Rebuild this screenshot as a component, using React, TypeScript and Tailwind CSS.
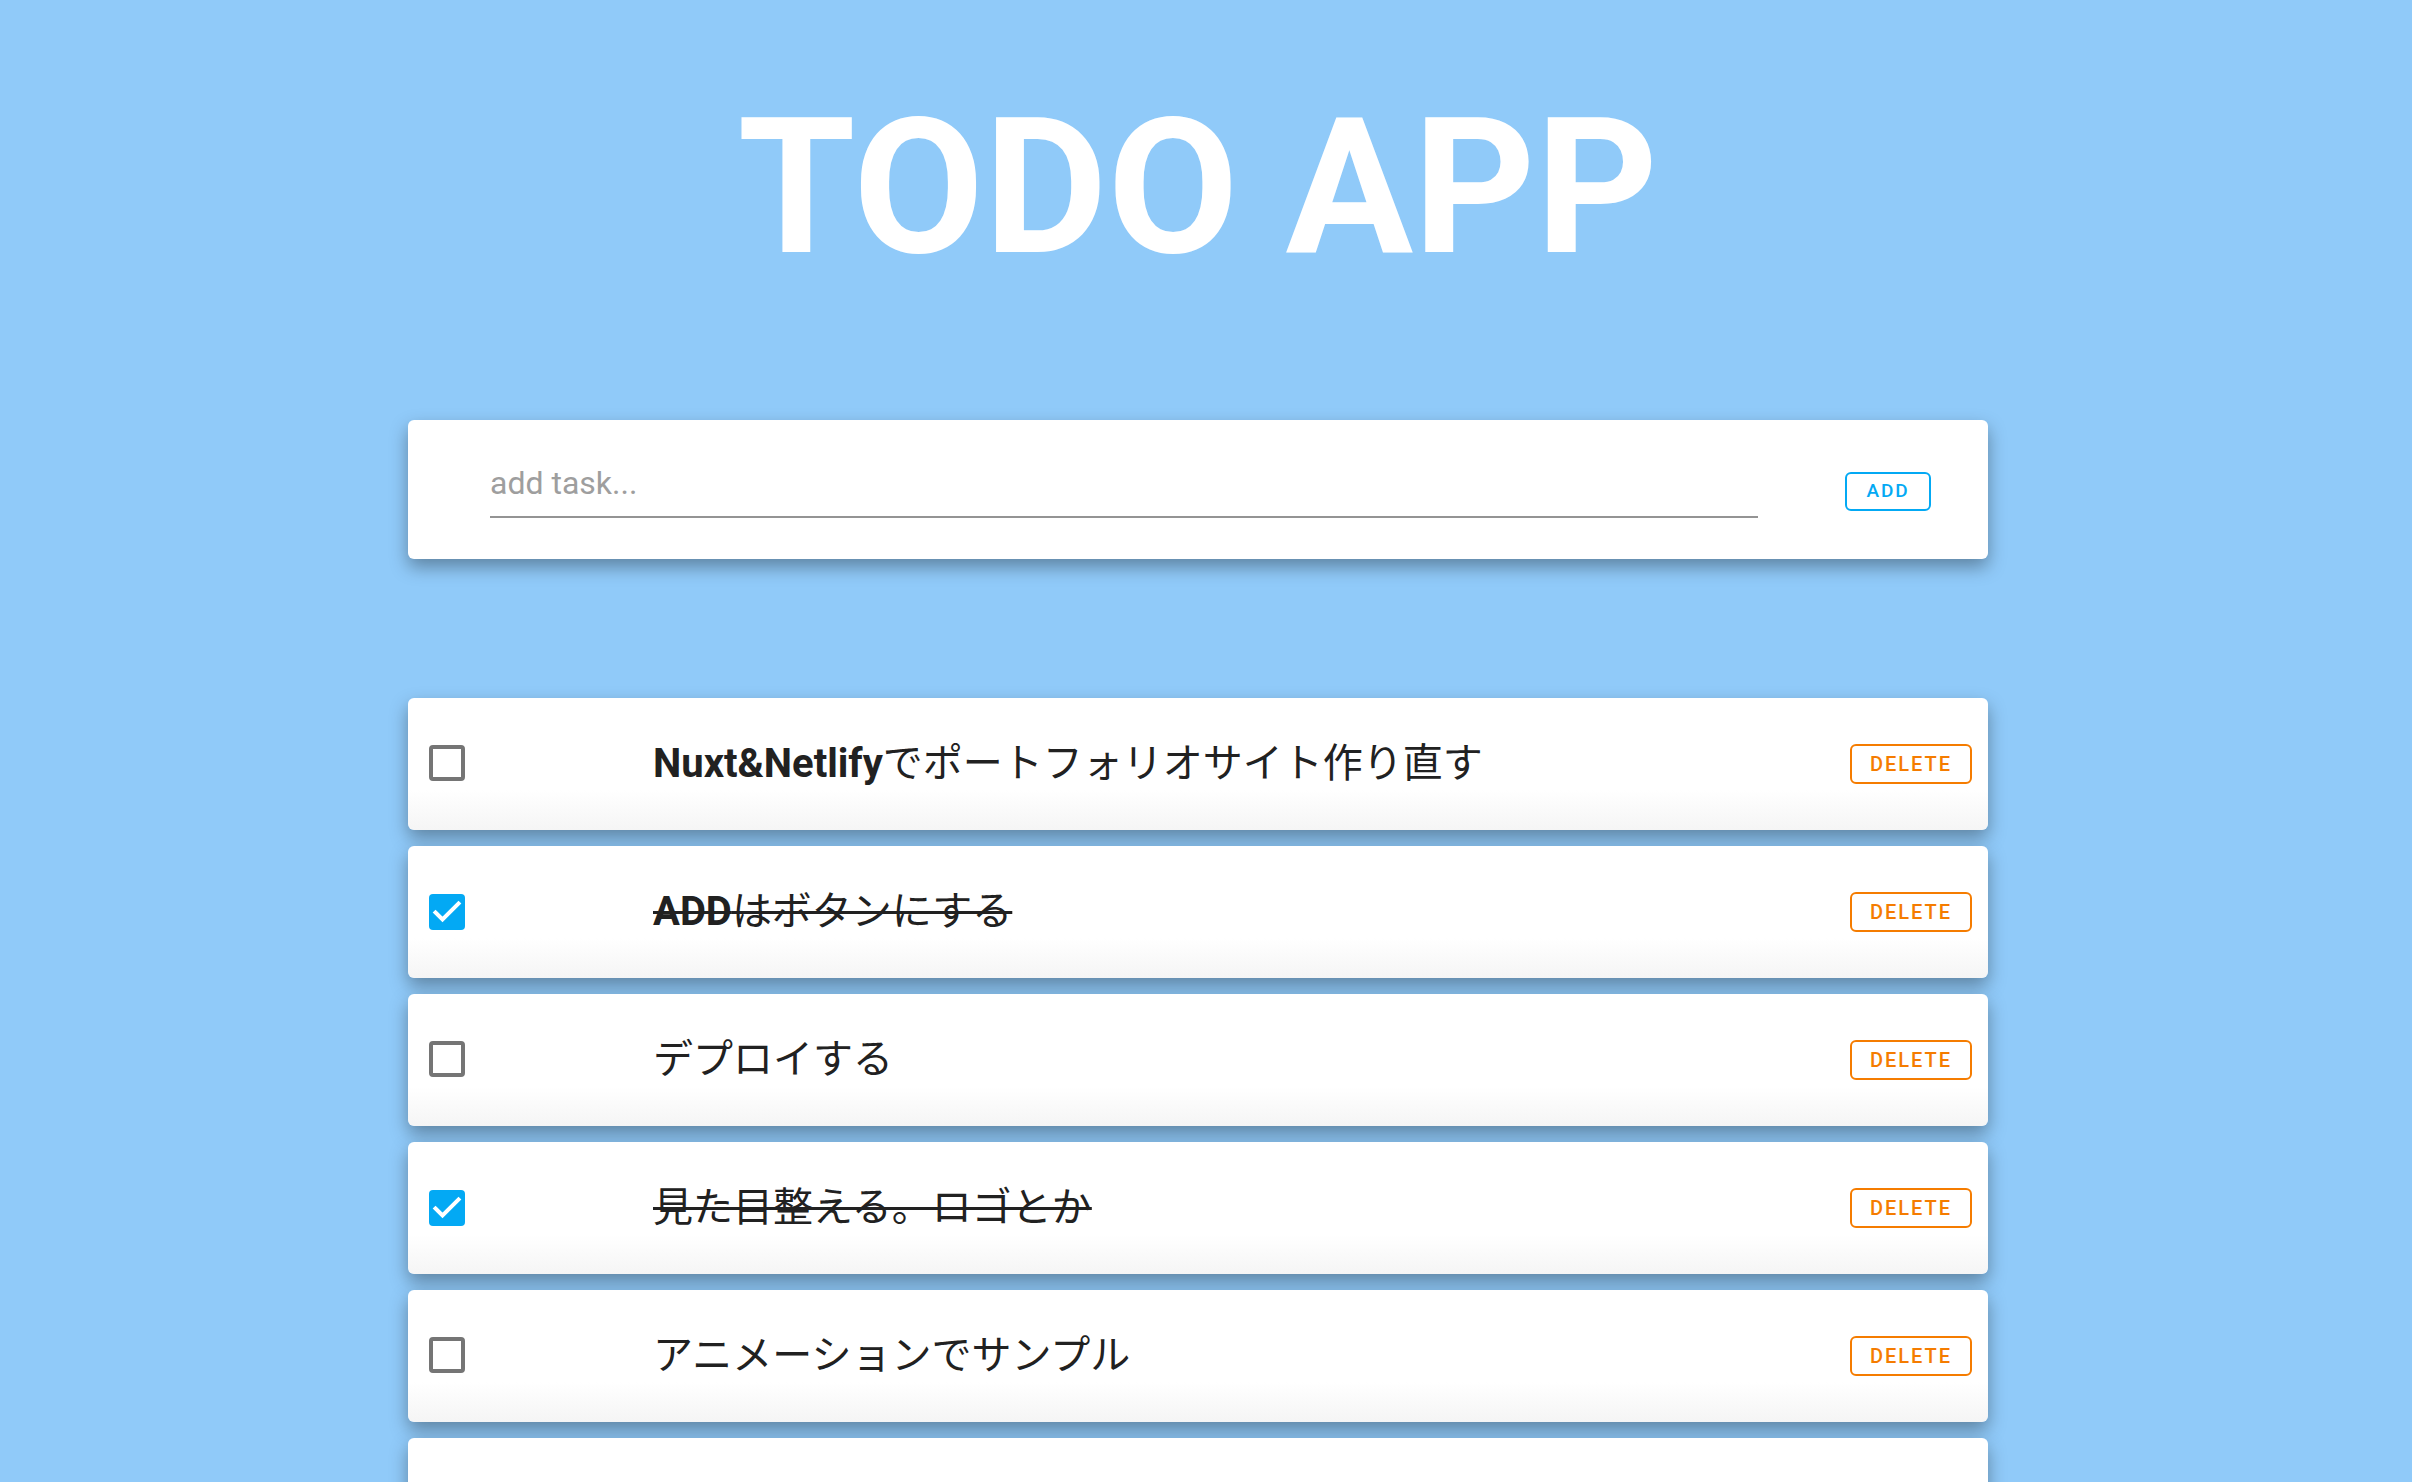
import React, { useState } from "react";

interface Todo {
  id: number;
  text: string;
  done: boolean;
}

const initialTodos: Todo[] = [
  { id: 1, text: "Nuxt&Netlifyでポートフォリオサイト作り直す", done: false },
  { id: 2, text: "ADDはボタンにする", done: true },
  { id: 3, text: "デプロイする", done: false },
  { id: 4, text: "見た目整える。ロゴとか", done: true },
  { id: 5, text: "アニメーションでサンプル", done: false },
  { id: 6, text: "READMEを書く", done: false },
];

const fontStack = "font-['Roboto','Noto_Sans_CJK_JP',sans-serif]";

// Latin runs are bold, Japanese stays regular
const renderText = (text: string) =>
  text.split(/([A-Za-z&]+)/).map((part, i) =>
    /^[A-Za-z&]+$/.test(part) ? (
      <span key={i} className="font-bold">
        {part}
      </span>
    ) : (
      <span key={i} className="font-normal">
        {part}
      </span>
    ),
  );

const Checkbox = ({
  checked,
  onChange,
}: {
  checked: boolean;
  onChange: () => void;
}) => (
  <button
    onClick={onChange}
    className={
      checked
        ? "flex h-[36px] w-[36px] items-center justify-center rounded-[4px] bg-[#03a9f4]"
        : "h-[36px] w-[36px] rounded-[4px] border-[4px] border-[#757575] bg-white"
    }
  >
    {checked && (
      <svg width="36" height="36" viewBox="0 0 36 36" fill="none">
        <path
          d="M6.5 18.5 L13.5 25.5 L29.5 9.5"
          stroke="white"
          strokeWidth="4"
          strokeLinecap="square"
        />
      </svg>
    )}
  </button>
);

const App = () => {
  const [todos, setTodos] = useState<Todo[]>(initialTodos);
  const [task, setTask] = useState("");

  const addTodo = () => {
    if (!task.trim()) return;
    setTodos([...todos, { id: Date.now(), text: task, done: false }]);
    setTask("");
  };

  const toggle = (id: number) =>
    setTodos(todos.map((t) => (t.id === id ? { ...t, done: !t.done } : t)));

  const remove = (id: number) => setTodos(todos.filter((t) => t.id !== id));

  return (
    <div
      className={`h-[1482px] w-full overflow-hidden bg-[#90caf9] pr-[16px] pt-[92px] ${fontStack}`}
    >
      <h1 className="text-center text-[190px] font-bold leading-[190px] text-white">
        TODO APP
      </h1>

      <div className="mx-auto mt-[138px] flex h-[139px] w-[1580px] items-start rounded-md bg-white pl-[82px] pr-[57px] shadow-[0_8px_18px_rgba(0,0,0,0.35)]">
        <div className="mt-[43px] w-[1268px] border-b-2 border-[#949494] pb-[13px]">
          <input
            value={task}
            onChange={(e) => setTask(e.target.value)}
            placeholder="add task..."
            className="h-[40px] w-full bg-transparent text-[32px] leading-[40px] text-[#212121] outline-none placeholder:text-[#9e9e9e]"
          />
        </div>
        <button
          onClick={addTodo}
          className="ml-auto mt-[52px] flex h-[39px] w-[86px] items-center justify-center rounded-[6px] border-2 border-[#03a9f4] text-[19px] font-medium tracking-[0.1em] text-[#03a9f4]"
        >
          ADD
        </button>
      </div>

      <div className="mx-auto mt-[139px] flex w-[1580px] flex-col gap-4">
        {todos.map((todo) => (
          <div
            key={todo.id}
            className="flex h-[132px] items-center rounded-md bg-linear-to-b from-white from-70% to-[#f5f5f5] shadow-[0_8px_18px_rgba(0,0,0,0.35)]"
          >
            <div className="w-[245px] pl-[21px]">
              <Checkbox checked={todo.done} onChange={() => toggle(todo.id)} />
            </div>
            <p
              className={
                todo.done
                  ? "flex-1 text-[40px] leading-[40px] text-[#212121] line-through decoration-[3px] decoration-[#212121]"
                  : "flex-1 text-[40px] leading-[40px] text-[#212121]"
              }
            >
              {renderText(todo.text)}
            </p>
            <button
              onClick={() => remove(todo.id)}
              className="mr-[16px] flex h-[40px] w-[122px] items-center justify-center rounded-[6px] border-2 border-[#f57c00] text-[20px] font-medium tracking-[0.1em] text-[#f57c00]"
            >
              DELETE
            </button>
          </div>
        ))}
      </div>
    </div>
  );
};

export default App;
